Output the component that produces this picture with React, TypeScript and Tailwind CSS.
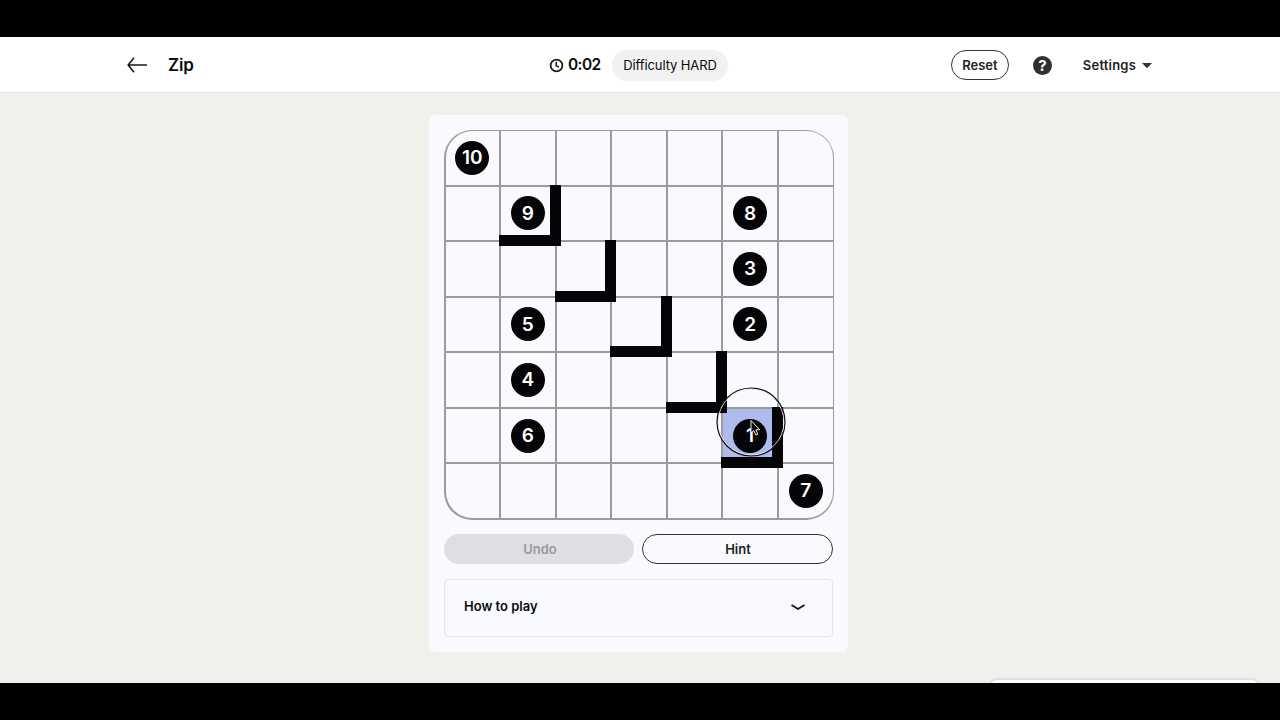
import clsx from "clsx";

const SIZE = 7;

// cell index -> number shown on the cell
const numbers: Record<number, number> = {
  0: 10,
  8: 9,
  12: 8,
  19: 3,
  22: 5,
  26: 2,
  29: 4,
  36: 6,
  40: 1,
  48: 7,
};

// cells with a wall on their right and bottom sides
const walls = [8, 16, 24, 32, 40];

const activeCell = 40;

function Header() {
  return (
    <header className="flex items-center h-14 bg-white border-[#e6e5e2] border-b pt-px pl-[127px] pr-[128px]">
      {/* Title */}
      <div className="flex items-center w-[422px]">
        <svg className="w-5 h-4" viewBox="0 0 20 16" fill="none" stroke="#1a1a1a" strokeWidth="1.6">
          <path d="M20 8H1.2M7 .8 1.2 8 7 15.2" />
        </svg>
        <h1 className="ml-[21px] font-semibold text-[17px] leading-6 tracking-[-0.2px]">Zip</h1>
      </div>

      {/* Timer */}
      <div className="flex items-center w-[63px]">
        <svg className="w-[15px] h-[15px]" viewBox="0 0 15 15" fill="none" stroke="#1a1a1a" strokeWidth="1.8">
          <circle cx="7.5" cy="7.5" r="5.9" />
          <path d="M7.2 3.8V7.7L10 9.1" strokeWidth="1.5" />
        </svg>
        <span className="ml-1 font-semibold text-[15.5px] tracking-[-0.6px]">0:02</span>
      </div>
      <span className="flex justify-center items-center rounded-full w-[116px] h-[31px] pt-[2px] bg-[#f1f1f1] text-[13px] tracking-[-0.1px]">
        Difficulty HARD
      </span>

      {/* Actions */}
      <div className="flex items-center ml-auto">
        <button className="border border-[#333] rounded-full w-[58px] h-[30px] pt-[2px] font-semibold text-[#222] text-[13px]">
          Reset
        </button>
        <span className="flex justify-center items-center ml-6 rounded-full w-[19px] h-[19px] bg-[#303030] font-bold text-[15px] text-white leading-none">
          ?
        </span>
        <button className="flex items-center ml-[31px] pt-px font-semibold text-[#222] text-[13px] tracking-[0.2px]">
          Settings
          <svg className="ml-[6px] w-[10px] h-[5px]" viewBox="0 0 10 5" fill="#333">
            <path d="M0 0h10L5.8 4.6q-.8.7-1.6 0z" />
          </svg>
        </button>
      </div>
    </header>
  );
}

function Cell({ index }: { index: number }) {
  const hasWall = walls.includes(index);

  return (
    <div
      className={clsx(
        "relative flex justify-center items-center",
        index === activeCell ? "bg-[#aebbed]" : "bg-[#f9faff]",
        index === 0 && "rounded-tl-[26.5px]",
        index === SIZE - 1 && "rounded-tr-[26.5px]",
        index === SIZE * (SIZE - 1) && "rounded-bl-[26.5px]",
        index === SIZE * SIZE - 1 && "rounded-br-[26.5px]"
      )}
    >
      {numbers[index] && (
        <span className="flex justify-center items-center rounded-full w-[34px] h-[34px] pt-px bg-[#050507] font-semibold text-[19px] text-white">
          {numbers[index]}
        </span>
      )}
      {hasWall && (
        <>
          <div className="z-10 absolute -top-[2px] -right-[6px] -bottom-[6px] w-[11px] bg-[#050507]" />
          <div className="z-10 absolute -left-[2px] -right-[6px] -bottom-[6px] h-[11px] bg-[#050507]" />
        </>
      )}
      {index === activeCell && <Pointer />}
    </div>
  );
}

// Mouse pointer with its highlight ring
function Pointer() {
  return (
    <svg className="z-20 absolute -left-[7px] -top-[22px] w-[70px] h-[70px]" viewBox="0 0 70 70" fill="none">
      <circle cx="35" cy="35" r="33" stroke="#e8e8ee" strokeWidth="1" />
      <circle cx="35" cy="35" r="34" stroke="#111" strokeWidth="1.2" />
      <path
        d="M35 33.5V46l2.8-2.5 2 4.6 2-.9-1.9-4.4h3.7z"
        fill="#050507"
        stroke="#eee"
        strokeWidth="1"
        strokeLinejoin="round"
      />
    </svg>
  );
}

function Board() {
  return (
    <div className="grid grid-cols-7 grid-rows-7 gap-[2px] p-[1.5px] rounded-[28px] w-[390px] h-[390px] bg-[#9c9c9a]">
      {Array.from({ length: SIZE * SIZE }, (_, i) => (
        <Cell key={i} index={i} />
      ))}
    </div>
  );
}

export default function App() {
  return (
    <div className="flex flex-col w-[1280px] h-[720px] py-[37px] bg-black overflow-hidden text-[#0a0a0a] font-['Inter',sans-serif]">
      <Header />
      <main className="relative flex-1 bg-[#f1f0ec] pt-[22px] pl-[429px] overflow-hidden">
        <div className="rounded-md w-[419px] h-[537px] bg-[#f9faff] pt-[14.5px] px-[15px]">
          <Board />
          <div className="flex gap-2 mt-[14.5px]">
            <button className="flex-1 rounded-full h-[30px] pt-px pl-[2px] bg-[#dedfe2] font-semibold text-[#98999b] text-[13px]">
              Undo
            </button>
            <button className="flex-1 border border-[#333] rounded-full h-[30px] pt-px pl-px font-semibold text-[#222] text-[13px]">
              Hint
            </button>
          </div>
          <div className="flex justify-between items-center mt-[15px] border border-[#e3e4e8] rounded w-[389px] h-[58px] pl-[19px] pr-[27px] pb-[2px]">
            <h2 className="font-semibold text-[13px]">How to play</h2>
            <svg className="w-[14px] h-[6px]" viewBox="0 0 14 6" fill="none" stroke="#111" strokeWidth="1.8">
              <path d="M.5.9 7 4.9 13.5.9" />
            </svg>
          </div>
        </div>

        {/* Collapsed messaging tab */}
        <div className="right-[20px] -bottom-[13px] absolute border-2 border-[#e0dfdc] rounded-lg w-[271px] h-[18px] bg-white" />
      </main>
    </div>
  );
}
